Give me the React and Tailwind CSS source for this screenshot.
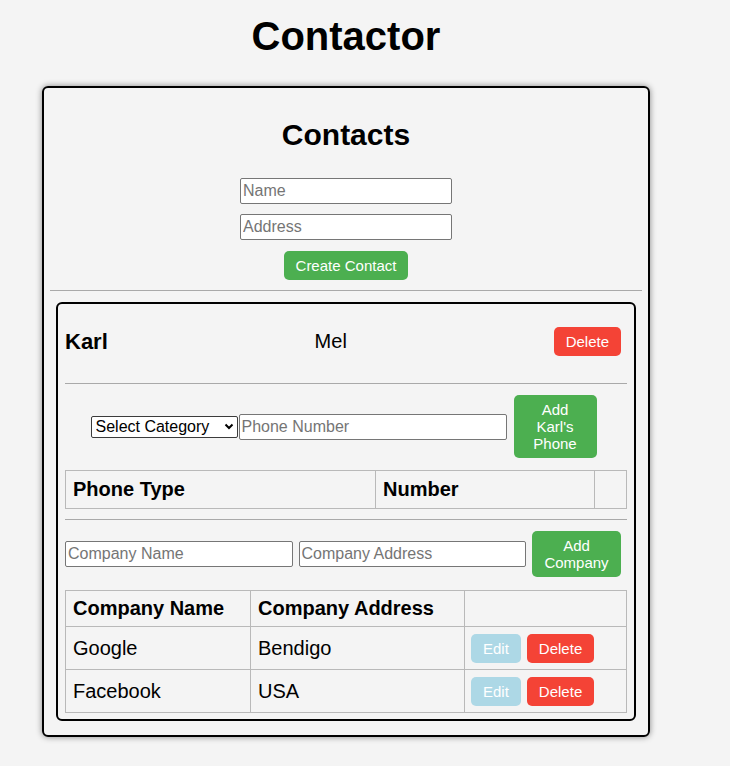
import React from 'react';

const companies = [
  { name: 'Google', address: 'Bendigo' },
  { name: 'Facebook', address: 'USA' },
];

const inputCls =
  "h-[26px] rounded-[2px] border border-[#767676] bg-white px-[2px] text-[16px] text-black placeholder:text-[#757575] outline-none";

const App = () => {
  return (
    <div className="min-h-screen bg-[#f4f4f4] font-['Liberation_Sans',Arial,sans-serif] text-black">
      <div className="w-[692px] pt-[13px] pb-[29px]">
        <h1 className="text-center text-[40px] font-bold leading-[46px]">Contactor</h1>

        {/* Contacts card */}
        <div className="mx-auto mt-[27px] w-[608px] rounded-[6px] border-2 border-black px-[6px] pb-[14px] pt-[30px] shadow-[0_0_6px_rgba(0,0,0,0.45)]">
          <h2 className="text-center text-[30px] font-bold leading-[34px]">Contacts</h2>

          <div className="mt-[26px] flex flex-col items-center">
            <input className={`${inputCls} w-[212px]`} placeholder="Name" />
            <input className={`${inputCls} mt-[10px] w-[212px]`} placeholder="Address" />
            <button className="mt-[11px] rounded-[5px] bg-[#4caf50] px-3 py-[6px] text-[15px] leading-[17px] text-white">
              Create Contact
            </button>
          </div>

          <div className="mt-[10px] h-px bg-[#a9a9a9]" />

          {/* Contact */}
          <div className="mx-[6px] mt-[11px] rounded-[6px] border-2 border-black px-[7px] pb-[6px]">
            <div className="flex items-center justify-between pb-[27px] pt-[23px]">
              <h3 className="text-[22px] font-bold leading-[26px]">Karl</h3>
              <span className="text-[20px] leading-[23px]">Mel</span>
              <button className="mr-[6px] rounded-[5px] bg-[#f44336] px-3 py-[6px] text-[15px] leading-[17px] text-white">
                Delete
              </button>
            </div>

            <div className="h-px bg-[#a9a9a9]" />

            <div className="mt-[11px] flex items-center justify-center">
              <div className="relative">
                <select className="h-[22px] w-[147px] appearance-none rounded-[2px] border border-[#3b3b3b] bg-white pl-[4px] text-[16px] leading-[18px] text-black outline-none">
                  <option>Select Category</option>
                  <option>Mobile</option>
                  <option>Home</option>
                  <option>Work</option>
                </select>
                <svg className="pointer-events-none absolute right-[4px] top-[8px]" width="10" height="7" viewBox="0 0 10 7">
                  <path d="M1.5 1.5 L5 5 L8.5 1.5" fill="none" stroke="#000" strokeWidth="2" />
                </svg>
              </div>
              <input className={`${inputCls} ml-px h-[25px] w-[268px]`} placeholder="Phone Number" />
              <button className="ml-[7px] mr-[5px] w-[83px] rounded-[5px] bg-[#4caf50] px-3 py-[6px] text-[15px] leading-[17px] text-white">
                Add Karl's Phone
              </button>
            </div>

            <table className="mt-[12px] w-full table-fixed border-collapse">
              <colgroup>
                <col className="w-[310px]" />
                <col className="w-[219px]" />
                <col />
              </colgroup>
              <thead>
                <tr>
                  <th className="h-[38px] border border-[#b9b9b9] px-[7px] text-left text-[20px] font-bold leading-[23px]">Phone Type</th>
                  <th className="h-[38px] border border-[#b9b9b9] px-[7px] text-left text-[20px] font-bold leading-[23px]">Number</th>
                  <th className="h-[38px] border border-[#b9b9b9]" />
                </tr>
              </thead>
            </table>

            <div className="mt-[10px] h-px bg-[#a9a9a9]" />

            <div className="mt-[11px] flex items-center gap-[6px] pr-[6px]">
              <input className={`${inputCls} min-w-0 flex-1`} placeholder="Company Name" />
              <input className={`${inputCls} min-w-0 flex-1`} placeholder="Company Address" />
              <button className="w-[89px] rounded-[5px] bg-[#4caf50] px-3 py-[6px] text-[15px] leading-[17px] text-white">
                Add Company
              </button>
            </div>

            <table className="mt-[13px] w-full table-fixed border-collapse">
              <colgroup>
                <col className="w-[185px]" />
                <col className="w-[214px]" />
                <col />
              </colgroup>
              <thead>
                <tr>
                  <th className="h-[36px] border border-[#b9b9b9] px-[7px] text-left text-[20px] font-bold leading-[23px]">Company Name</th>
                  <th className="h-[36px] border border-[#b9b9b9] px-[7px] text-left text-[20px] font-bold leading-[23px]">Company Address</th>
                  <th className="h-[36px] border border-[#b9b9b9]" />
                </tr>
              </thead>
              <tbody>
                {companies.map((c) => (
                  <tr key={c.name}>
                    <td className="h-[43px] border border-[#b9b9b9] px-[7px] text-[20px] leading-[23px]">{c.name}</td>
                    <td className="h-[43px] border border-[#b9b9b9] px-[7px] text-[20px] leading-[23px]">{c.address}</td>
                    <td className="h-[43px] border border-[#b9b9b9] px-[6px]">
                      <div className="flex gap-[6px]">
                        <button className="rounded-[5px] bg-[#add8e6] px-3 py-[6px] text-[15px] leading-[17px] text-white">Edit</button>
                        <button className="rounded-[5px] bg-[#f44336] px-3 py-[6px] text-[15px] leading-[17px] text-white">Delete</button>
                      </div>
                    </td>
                  </tr>
                ))}
              </tbody>
            </table>
          </div>
        </div>
      </div>
    </div>
  );
};

export default App;
